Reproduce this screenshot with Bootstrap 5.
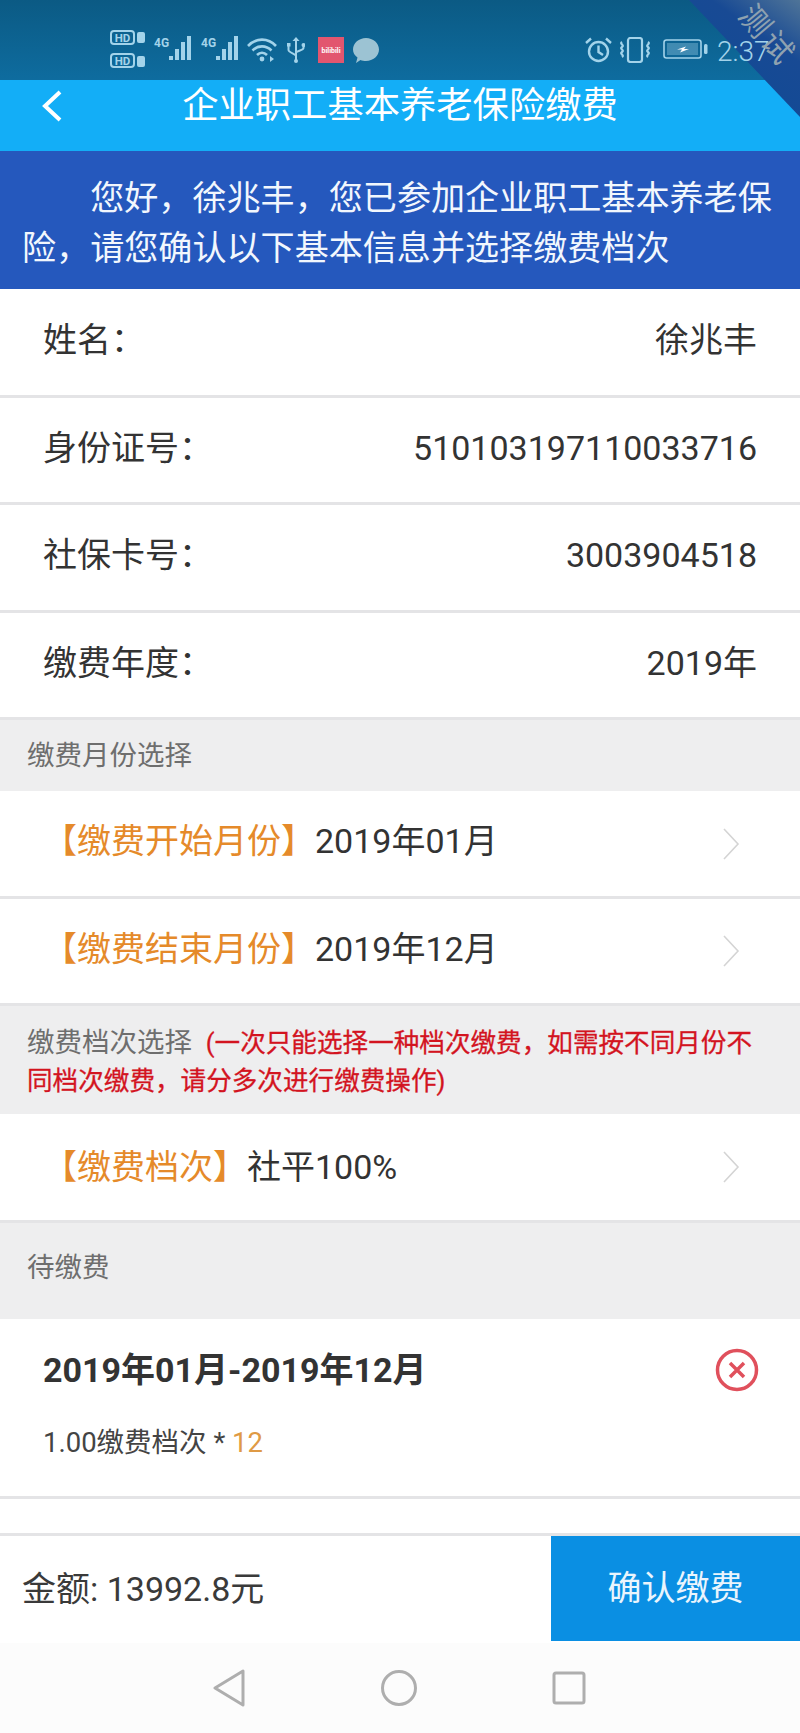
<!DOCTYPE html>
<html lang="zh-CN">
<head>
    <meta charset="UTF-8">
    <meta name="viewport" content="width=device-width, initial-scale=1.0">
    <title>企业职工基本养老保险缴费</title>
    <link href="https://cdn.jsdelivr.net/npm/bootstrap@5.3.0/dist/css/bootstrap.min.css" rel="stylesheet">
    <style>
        body { width: 800px; height: 1733px; overflow: hidden; background: #fff; color: #333; font-family: Roboto, "Noto Sans CJK SC", sans-serif; font-size: 34px; }
        .status-strip { height: 80px; background: linear-gradient(180deg, #0b5a84 0%, #0e6c9f 100%); }
        .status-items { position: relative; z-index: 2; height: 80px; padding: 30px 0 0 110px; color: #a3d3ea; }
        .status-items svg { display: block; flex: none; }
        .sig-icon { margin: 6px 0 0 8px; }
        .wifi-icon { margin: 8px 0 0 7px; }
        .usb-icon { margin: 7px 0 0 10px; }
        .app-icon { margin: 7px 0 0 13px; }
        .bubble-icon { margin: 8px 0 0 9px; }
        .alarm-icon { margin-top: 7px; }
        .vibe-icon { margin: 7px 0 0 6px; }
        .batt-icon { margin: 9px 0 0 11px; }
        .clock-text { font-size: 28px; font-weight: 300; line-height: 1; margin: 8px 0 0 8px; width: 83px; }
        .corner-flag { position: absolute; z-index: 1; top: 0; right: 0; width: 111px; height: 117px; background: linear-gradient(215deg, #4f7498 0%, #184a94 32%, #0e4a96 100%); clip-path: polygon(0 0, 100% 0, 100% 100%); }
        .corner-text { position: absolute; z-index: 3; top: 6px; left: 739px; font-size: 31px; line-height: 31px; color: #8fa2b0; transform: rotate(50deg); transform-origin: 16px 16px; letter-spacing: 3px; white-space: nowrap; }
        .title-bar { height: 71px; background: #13aef7; color: #fff; padding: 2px 0 22px 0; font-size: 36.3px; line-height: 47px; }
        .title-side { width: 150px; padding-left: 42px; }
        .hello-banner { height: 138px; background: #2558bd; color: #f2f7fd; padding: 22px 22px 0; font-size: 34.1px; line-height: 50px; text-indent: 2em; }
        .info-row { height: 107px; border-bottom: 3px solid #e4e4e6; background: #fff; padding: 0 43px; }
        .first-row { height: 109px; }
        .third-row { height: 108px; }
        .lift-text { margin-bottom: 4px; }
        .pick-row { height: 108px; padding-right: 60px; }
        .pick-row-b { height: 107px; }
        .pick-row-c { height: 109px; }
        .pick-label { color: #e58a2a; }
        .group-head { background: #eeeeef; color: #6e6e6e; font-size: 27.5px; line-height: 40px; padding: 0 27px; }
        .head-month { height: 71px; padding-top: 16px; }
        .head-level { height: 108px; padding: 18px 35px 0 27px; line-height: 37px; }
        .head-wait { height: 96px; padding-top: 25px; }
        .red-note { color: #d3141f; font-size: 25.6px; margin-left: 7px; -webkit-text-stroke: 0.3px #d3141f; }
        .pending-box { height: 180px; padding: 26px 43px 0; border-bottom: 3px solid #e4e4e6; }
        .pending-title { font-weight: 700; line-height: 50px; color: #333; }
        .pending-x { margin-right: -2px; }
        .pending-sub { font-size: 27.5px; line-height: 40px; margin-top: 28px; color: #444; }
        .sub-num { color: #df9a45; }
        .gap-strip { height: 37px; border-bottom: 3px solid #e4e4e6; }
        .pay-bar { height: 107px; }
        .pay-sum { padding-left: 22px; color: #3a3a3a; }
        .pay-btn { width: 249px; height: 105px; background: #0a8fe3; color: #eaf5fd; border: 0; border-radius: 0; font-size: 34px; padding: 0; }
        .soft-keys { height: 90px; background: #fcfcfc; padding: 0 214px 0 212px; }
    </style>
</head>
<body>
    <div class="position-relative">
        <div class="status-strip">
            <div class="status-items d-flex align-items-start">
                <svg width="36" height="38" viewBox="0 0 36 38" fill="none" stroke="currentColor">
                    <rect x="1" y="1" width="23" height="13" rx="3" stroke-width="2"/>
                    <text x="12.500" y="11.500" font-size="11.500" font-weight="700" fill="currentColor" stroke="none" text-anchor="middle" font-family="Roboto">HD</text>
                    <rect x="27" y="2" width="8" height="11" rx="2" fill="currentColor" stroke="none"/>
                    <rect x="1" y="24" width="23" height="13" rx="3" stroke-width="2"/>
                    <text x="12.500" y="34.500" font-size="11.500" font-weight="700" fill="currentColor" stroke="none" text-anchor="middle" font-family="Roboto">HD</text>
                    <rect x="27" y="26" width="8" height="11" rx="2" fill="currentColor" stroke="none"/>
                </svg>
                <svg class="sig-icon" width="39" height="25" viewBox="0 0 39 25" fill="currentColor">
                    <text x="0" y="11" font-size="12" font-weight="700" font-family="Roboto">4G</text>
                    <rect x="15" y="20" width="4" height="4"/><rect x="21" y="13" width="4" height="11"/><rect x="27" y="6" width="4" height="18"/><rect x="33" y="0" width="4" height="24"/>
                </svg>
                <svg class="sig-icon" width="39" height="25" viewBox="0 0 39 25" fill="currentColor">
                    <text x="0" y="11" font-size="12" font-weight="700" font-family="Roboto">4G</text>
                    <rect x="15" y="20" width="4" height="4"/><rect x="21" y="13" width="4" height="11"/><rect x="27" y="6" width="4" height="18"/><rect x="33" y="0" width="4" height="24"/>
                </svg>
                <svg class="wifi-icon" width="30" height="24" viewBox="0 0 30 24" fill="none" stroke="currentColor" stroke-width="2.600">
                    <path d="M1 8c8-8.500 20-8.500 28 0M5.500 12.500c5.500-5.500 13.500-5.500 19 0M10 17c3-3 7-3 10 0"/>
                    <circle cx="15" cy="21" r="2.400" fill="currentColor" stroke="none"/>
                    <path d="M23 18l4 3-4 3z" fill="currentColor" stroke="none"/>
                </svg>
                <svg class="usb-icon" width="18" height="26" viewBox="0 0 18 26" fill="none" stroke="currentColor" stroke-width="2">
                    <path d="M9 25V3M1.500 9v4c0 2.500 7.500 4 7.500 6M16.500 9v2c0 2.500-7.500 3-7.500 5"/>
                    <path d="M9 0l3.500 4h-7z" fill="currentColor" stroke="none"/>
                    <rect x="0" y="6" width="3.500" height="3.500" fill="currentColor" stroke="none"/>
                    <circle cx="16.500" cy="8" r="2" fill="currentColor" stroke="none"/>
                    <circle cx="9" cy="24" r="2" fill="currentColor" stroke="none"/>
                </svg>
                <svg class="app-icon" width="26" height="26" viewBox="0 0 26 26">
                    <rect width="26" height="26" fill="#e2566f"/>
                    <text x="13" y="16" font-size="7" font-weight="700" fill="#fff" text-anchor="middle" font-family="Roboto">bilibili</text>
                </svg>
                <svg class="bubble-icon" width="26" height="25" viewBox="0 0 26 25">
                    <path d="M13 0c7 0 13 5 13 11.500S20 23 13 23c-2 0-4-.4-5.500-1L3 25l1.500-5.500C1.500 17.500 0 14.500 0 11.500 0 5 6 0 13 0z" fill="#9cc3d3"/>
                </svg>
                <div class="ms-auto d-flex align-items-start">
                    <svg class="alarm-icon" width="27" height="26" viewBox="0 0 27 26" fill="none" stroke="currentColor" stroke-width="2.400">
                        <circle cx="13.500" cy="14.500" r="9.500"/>
                        <path d="M13.500 8.500v6.500l4.500 3M1 6l5-4.500M26 6l-5-4.500"/>
                    </svg>
                    <svg class="vibe-icon" width="34" height="26" viewBox="0 0 34 26" fill="none" stroke="currentColor" stroke-width="2.200">
                        <rect x="10" y="1" width="14" height="24" rx="2.500"/>
                        <path d="M4 5c-3 2 3 3 0 5s3 3 0 5 3 3 0 5M30 5c3 2-3 3 0 5s-3 3 0 5-3 3 0 5"/>
                    </svg>
                    <svg class="batt-icon" width="46" height="20" viewBox="0 0 46 20" fill="none" stroke="currentColor">
                        <rect x="1" y="1" width="37" height="18" rx="2.500" stroke-width="1.600"/>
                        <rect x="4" y="4" width="31" height="12" fill="currentColor" opacity="0.35" stroke="none"/>
                        <path d="M14 10.500l9-3-2 2.500h5l-9 3.500 2-3z" fill="#fff" stroke="none"/>
                        <rect x="41" y="5" width="3.500" height="10" rx="1.500" fill="currentColor" stroke="none"/>
                    </svg>
                    <div class="clock-text">2:37</div>
                </div>
            </div>
        </div>

        <nav class="title-bar navbar flex-nowrap align-items-start">
            <div class="title-side pt-2">
                <svg class="d-block" width="20" height="32" viewBox="0 0 20 32" fill="none" stroke="#fff" stroke-width="4">
                    <path d="M18 2L3 16l15 14"/>
                </svg>
            </div>
            <div class="flex-grow-1 text-center">企业职工基本养老保险缴费</div>
            <div class="title-side"></div>
        </nav>

        <div class="corner-flag"></div>
        <div class="corner-text">测试</div>
    </div>

    <div class="hello-banner">您好，徐兆丰，您已参加企业职工基本养老保险，请您确认以下基本信息并选择缴费档次</div>

    <div class="info-row first-row d-flex align-items-center justify-content-between"><span class="lift-text">姓名：</span><span class="lift-text">徐兆丰</span></div>
    <div class="info-row d-flex align-items-center justify-content-between"><span class="lift-text">身份证号：</span><span class="lift-text">510103197110033716</span></div>
    <div class="info-row third-row d-flex align-items-center justify-content-between"><span class="lift-text">社保卡号：</span><span class="lift-text">3003904518</span></div>
    <div class="info-row d-flex align-items-center justify-content-between"><span class="lift-text">缴费年度：</span><span class="lift-text">2019年</span></div>

    <div class="group-head head-month">缴费月份选择</div>
    <div class="info-row pick-row d-flex align-items-center justify-content-between">
        <span class="lift-text"><span class="pick-label">【缴费开始月份】</span>2019年01月</span>
        <svg width="18" height="32" viewBox="0 0 18 32" fill="none" stroke="#d4d4d4" stroke-width="1.600"><path d="M2 1l14 15L2 31"/></svg>
    </div>
    <div class="info-row pick-row pick-row-b d-flex align-items-center justify-content-between">
        <span class="lift-text"><span class="pick-label">【缴费结束月份】</span>2019年12月</span>
        <svg width="18" height="32" viewBox="0 0 18 32" fill="none" stroke="#d4d4d4" stroke-width="1.600"><path d="M2 1l14 15L2 31"/></svg>
    </div>

    <div class="group-head head-level">缴费档次选择 <span class="red-note">(一次只能选择一种档次缴费，如需按不同月份不同档次缴费，请分多次进行缴费操作)</span></div>
    <div class="info-row pick-row pick-row-c d-flex align-items-center justify-content-between">
        <span><span class="pick-label">【缴费档次】</span>社平100%</span>
        <svg width="18" height="32" viewBox="0 0 18 32" fill="none" stroke="#d4d4d4" stroke-width="1.600"><path d="M2 1l14 15L2 31"/></svg>
    </div>

    <div class="group-head head-wait">待缴费</div>
    <div class="pending-box">
        <div class="d-flex justify-content-between align-items-center">
            <div class="pending-title">2019年01月-2019年12月</div>
            <svg class="pending-x" width="44" height="44" viewBox="0 0 44 44" fill="none" stroke="#e0505c" stroke-width="3.500">
                <circle cx="22" cy="22" r="19.500"/>
                <path d="M15 15l14 14M29 15L15 29"/>
            </svg>
        </div>
        <div class="pending-sub">1.00缴费档次 * <span class="sub-num">12</span></div>
    </div>
    <div class="gap-strip"></div>

    <div class="pay-bar d-flex align-items-start justify-content-between">
        <div class="pay-sum align-self-center">金额: 13992.8元</div>
        <button class="btn pay-btn" type="button">确认缴费</button>
    </div>

    <div class="soft-keys d-flex align-items-center justify-content-between">
        <svg width="34" height="38" viewBox="0 0 34 38" fill="none" stroke="#aeaeae" stroke-width="3" stroke-linejoin="round"><path d="M31 2v34L3 19z"/></svg>
        <svg width="38" height="38" viewBox="0 0 38 38" fill="none" stroke="#aeaeae" stroke-width="3"><circle cx="19" cy="19" r="16.500"/></svg>
        <svg width="34" height="34" viewBox="0 0 34 34" fill="none" stroke="#aeaeae" stroke-width="3"><rect x="2" y="2" width="30" height="30" rx="2"/></svg>
    </div>
</body>
</html>
